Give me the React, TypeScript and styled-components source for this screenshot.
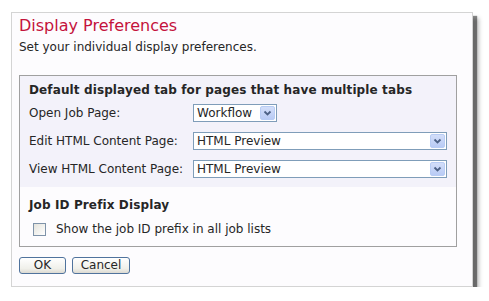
import React from "react";
import styled, { createGlobalStyle } from "styled-components";

const Global = createGlobalStyle`
  html, body { margin: 0; padding: 0; background: #ffffff; }
  body { font-family: "DejaVu Sans", Verdana, sans-serif; color: #262626; }
`;

const Page = styled.div`
  padding: 12px 0 0 11px;
`;

const Panel = styled.div`
  box-sizing: border-box;
  width: 462px;
  height: 275px;
  background: #fdfcfe;
  border: 1px solid #d4d4d4;
  box-shadow: 4px 4px 1px rgba(0, 0, 0, 0.45), 6px 6px 4px rgba(0, 0, 0, 0.25);
  padding: 3px 0 0 7px;
  display: flex;
  flex-direction: column;
`;

const Title = styled.h1`
  margin: 0;
  font-size: 16px;
  line-height: 20px;
  font-weight: normal;
  color: #c4123c;
`;

const Intro = styled.p`
  margin: 4px 0 0;
  font-size: 12px;
  line-height: 15px;
`;

const Fieldset = styled.div`
  margin-top: 20px;
  width: 438px;
  box-sizing: border-box;
  border: 1px solid #a0a0a0;
  background: #fdfcfe;
`;

const Section = styled.div<{ $tint?: boolean }>`
  padding: ${(p) => (p.$tint ? "6px 9px 9px" : "10px 9px 10px")};
  background: ${(p) => (p.$tint ? "#f3f2fa" : "transparent")};
`;

const Heading = styled.div`
  font-size: 12px;
  line-height: 16px;
  font-weight: bold;
  letter-spacing: 0.12px;
`;

const Grid = styled.div`
  margin-top: 6px;
  display: grid;
  grid-template-columns: 164px 254px;
  row-gap: 10px;
  align-items: center;
`;

const Label = styled.div`
  font-size: 12px;
  line-height: 15px;
`;

const Select = styled.div<{ $w: number }>`
  width: ${(p) => p.$w}px;
  height: 18px;
  box-sizing: border-box;
  border: 1px solid #7f9db9;
  background: #fff;
  display: flex;
  align-items: center;
  justify-content: space-between;
  padding: 0 1px 0 3px;
  font-size: 12px;
`;

const Arrow = styled.div`
  width: 15px;
  height: 14px;
  box-sizing: border-box;
  border: 1px solid #b8ccf4;
  border-radius: 2px;
  background: linear-gradient(#d3def9, #b9cbf5);
  display: flex;
  align-items: center;
  justify-content: center;
`;

const CheckRow = styled.div`
  margin-top: 9px;
  height: 14px;
  display: flex;
  align-items: center;
  padding-left: 4px;
  gap: 10px;
  font-size: 12px;
`;

const Box = styled.span`
  width: 13px;
  height: 13px;
  box-sizing: border-box;
  border: 1px solid #7f93a9;
  background: linear-gradient(135deg, #e4e3dc, #ffffff);
`;

const Buttons = styled.div`
  margin-top: 10px;
  display: flex;
  gap: 6px;
`;

const Button = styled.button<{ $w: number }>`
  width: ${(p) => p.$w}px;
  height: 17px;
  padding: 0;
  border: 1px solid #50739d;
  border-radius: 3px;
  background: linear-gradient(#ffffff, #f0f0ea 70%, #dcdad2);
  font-family: "DejaVu Sans", Verdana, sans-serif;
  font-size: 12px;
  line-height: 15px;
  color: #262626;
`;

const Chevron = () => (
  <svg width="9" height="6" viewBox="0 0 9 6">
    <path d="M1.5 1.5 L4.5 4.5 L7.5 1.5" fill="none" stroke="#4d6185" strokeWidth="1.8" />
  </svg>
);

const Dropdown = ({ w, value }: { w: number; value: string }) => (
  <Select $w={w}>
    <span>{value}</span>
    <Arrow>
      <Chevron />
    </Arrow>
  </Select>
);

export default function App() {
  return (
    <>
      <Global />
      <Page>
        <Panel>
          <Title>Display Preferences</Title>
          <Intro>Set your individual display preferences.</Intro>
          <Fieldset>
            <Section $tint>
              <Heading>Default displayed tab for pages that have multiple tabs</Heading>
              <Grid>
                <Label>Open Job Page:</Label>
                <Dropdown w={84} value="Workflow" />
                <Label>Edit HTML Content Page:</Label>
                <Dropdown w={254} value="HTML Preview" />
                <Label>View HTML Content Page:</Label>
                <Dropdown w={254} value="HTML Preview" />
              </Grid>
            </Section>
            <Section>
              <Heading>Job ID Prefix Display</Heading>
              <CheckRow>
                <Box />
                <span>Show the job ID prefix in all job lists</span>
              </CheckRow>
            </Section>
          </Fieldset>
          <Buttons>
            <Button $w={47}>OK</Button>
            <Button $w={58}>Cancel</Button>
          </Buttons>
        </Panel>
      </Page>
    </>
  );
}
